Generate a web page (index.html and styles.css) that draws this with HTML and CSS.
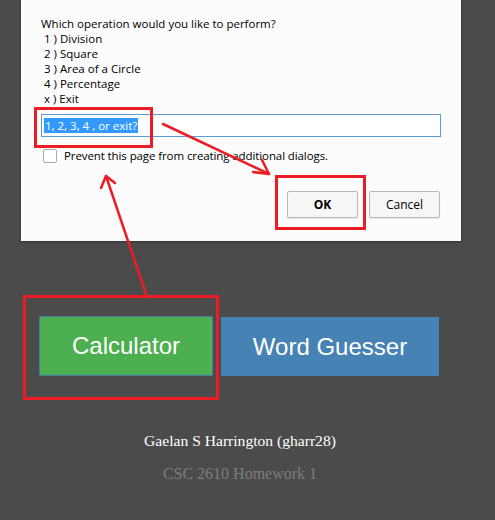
FILE: index.html
```html
<!DOCTYPE html>
<html>
<head>
<meta charset="utf-8">
<link rel="stylesheet" href="styles.css">
</head>
<body>
<div class="page">
  <div class="dialog">
    <div class="prompt">
      <div>Which operation would you like to perform?</div>
      <div>&nbsp;1 ) Division</div>
      <div>&nbsp;2 ) Square</div>
      <div>&nbsp;3 ) Area of a Circle</div>
      <div>&nbsp;4 ) Percentage</div>
      <div>&nbsp;x ) Exit</div>
    </div>
    <div class="input"><span class="sel">1, 2, 3, 4 , or exit?</span></div>
    <label class="check"><span class="box"></span><span class="check-text">Prevent this page from creating additional dialogs.</span></label>
    <div class="actions">
      <button class="btn ok">OK</button>
      <button class="btn">Cancel</button>
    </div>
  </div>
  <div class="main">
    <div class="choices">
      <div class="choice calc">Calculator</div>
      <div class="choice word">Word Guesser</div>
    </div>
    <p class="author">Gaelan S Harrington (gharr28)</p>
    <p class="course">CSC 2610 Homework 1</p>
  </div>
  <svg class="marks" width="495" height="520" viewBox="0 0 495 520">
    <g fill="none" stroke="#ed1c24" stroke-width="3">
      <rect x="35.5" y="108.5" width="116" height="38"/>
      <rect x="276.5" y="176.5" width="88" height="52"/>
      <rect x="24.5" y="296.5" width="193" height="102"/>
    </g>
    <g fill="none" stroke="#ed1c24" stroke-width="2.5" stroke-linecap="round" stroke-linejoin="round">
      <path d="M163 124 L269 174"/>
      <path d="M262 160 L269 174 L253 172"/>
      <path d="M147 297 L106 176"/>
      <path d="M101 188 L106 176 L115 183"/>
    </g>
  </svg>
</div>
</body>
</html>
```
FILE: styles.css
```css
html, body {
  margin: 0;
  padding: 0;
}
body {
  background: #4b4b4b;
  width: 495px;
  height: 520px;
  overflow: hidden;
}
.page {
  position: relative;
  width: 495px;
  height: 520px;
}
.dialog {
  margin-left: 21px;
  width: 440px;
  height: 241px;
  box-sizing: border-box;
  background: #fcfcfc;
  box-shadow: 0 1px 2px rgba(0,0,0,0.35);
  padding: 16px 21px 0 20px;
  font-family: "Open Sans", "Noto Sans", sans-serif;
  font-size: 11.5px;
  color: #000;
}
.prompt {
  line-height: 15px;
}
.input {
  margin-top: 8px;
  width: 400px;
  height: 23px;
  box-sizing: border-box;
  border: 1px solid #5b9bd5;
  background: #fff;
  padding: 2px 2px;
  line-height: 17px;
}
.sel {
  background: #3399ff;
  color: #fff;
  padding: 0 1px;
}
.check {
  display: flex;
  align-items: center;
  gap: 7px;
  margin-top: 12px;
  margin-left: 2px;
  line-height: 14px;
}
.check-text {
  letter-spacing: -0.1px;
}
.box {
  width: 12px;
  height: 12px;
  border: 1px solid #a8a8a8;
  border-radius: 2px;
  background: #fff;
}
.actions {
  display: flex;
  justify-content: flex-end;
  gap: 11px;
  margin-top: 28px;
}
.btn {
  width: 71px;
  height: 27px;
  border: 1px solid #b8b8b8;
  border-radius: 2px;
  background: #f6f6f6;
  box-shadow: 0 1px 1px rgba(0,0,0,0.1);
  font-family: "Open Sans", "Noto Sans", sans-serif;
  font-size: 12px;
  color: #000;
  padding: 0;
}
.btn.ok {
  font-weight: bold;
}
.main {
  margin-left: 39px;
  width: 402px;
  padding-top: 75px;
  text-align: center;
}
.choices {
  display: flex;
  align-items: flex-end;
  gap: 8px;
}
.choice {
  font-family: "Liberation Sans", Arial, sans-serif;
  font-size: 24px;
  color: #fff;
  display: flex;
  align-items: center;
  justify-content: center;
  box-sizing: border-box;
}
.calc {
  width: 174px;
  height: 60px;
  background: #4caf50;
  border: 1px solid #4a7aa8;
  border-radius: 2px;
}
.word {
  width: 218px;
  height: 59px;
  background: #4682b4;
}
.author {
  margin: 0;
  margin-top: 56px;
  font-family: "Liberation Serif", "Times New Roman", serif;
  font-size: 15.6px;
  line-height: 18px;
  color: #fff;
}
.course {
  margin: 0;
  margin-top: 15px;
  font-family: "Liberation Serif", "Times New Roman", serif;
  font-size: 16px;
  line-height: 18px;
  color: #7d7d7d;
}
.marks {
  position: absolute;
  left: 0;
  top: 0;
  pointer-events: none;
}
```
